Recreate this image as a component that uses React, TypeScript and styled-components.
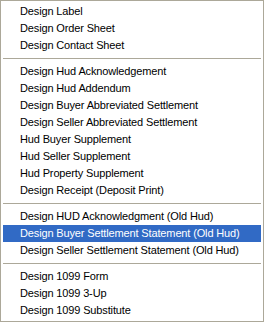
import React from "react";
import styled, { createGlobalStyle } from "styled-components";

const Global = createGlobalStyle`
  html, body { margin: 0; padding: 0; background: #ffffff; }
  body { font-family: "Liberation Sans", Arial, sans-serif; }
`;

const Menu = styled.div`
  box-sizing: border-box;
  width: 264px;
  height: 322px;
  border: 1px solid #aca899;
  padding: 2px;
  background: #ffffff;
  display: flex;
  flex-direction: column;
`;

const Item = styled.div<{ $active?: boolean }>`
  height: 17px;
  line-height: 17px;
  padding-left: 17px;
  font-size: 11px;
  letter-spacing: -0.14px;
  font-family: "Liberation Sans", Arial, sans-serif;
  white-space: nowrap;
  color: ${(p) => (p.$active ? "#ffffff" : "#000000")};
  background: ${(p) => (p.$active ? "#316ac5" : "transparent")};
`;

const Separator = styled.div`
  height: 9px;
  display: flex;
  align-items: center;
  &::after {
    content: "";
    display: block;
    width: 100%;
    height: 1px;
    background: #aca899;
  }
`;

type Entry = string | null;

const entries: Entry[] = [
  "Design Label",
  "Design Order Sheet",
  "Design Contact Sheet",
  null,
  "Design Hud Acknowledgement",
  "Design Hud Addendum",
  "Design Buyer Abbreviated Settlement",
  "Design Seller Abbreviated Settlement",
  "Hud Buyer Supplement",
  "Hud Seller Supplement",
  "Hud Property Supplement",
  "Design Receipt (Deposit Print)",
  null,
  "Design HUD Acknowledgment (Old Hud)",
  "Design Buyer Settlement Statement (Old Hud)",
  "Design Seller Settlement Statement (Old Hud)",
  null,
  "Design 1099 Form",
  "Design 1099 3-Up",
  "Design 1099 Substitute",
];

const ACTIVE = "Design Buyer Settlement Statement (Old Hud)";

export default function App() {
  return (
    <>
      <Global />
      <Menu>
        {entries.map((e, i) =>
          e === null ? (
            <Separator key={i} />
          ) : (
            <Item key={i} $active={e === ACTIVE}>
              {e}
            </Item>
          )
        )}
      </Menu>
    </>
  );
}
